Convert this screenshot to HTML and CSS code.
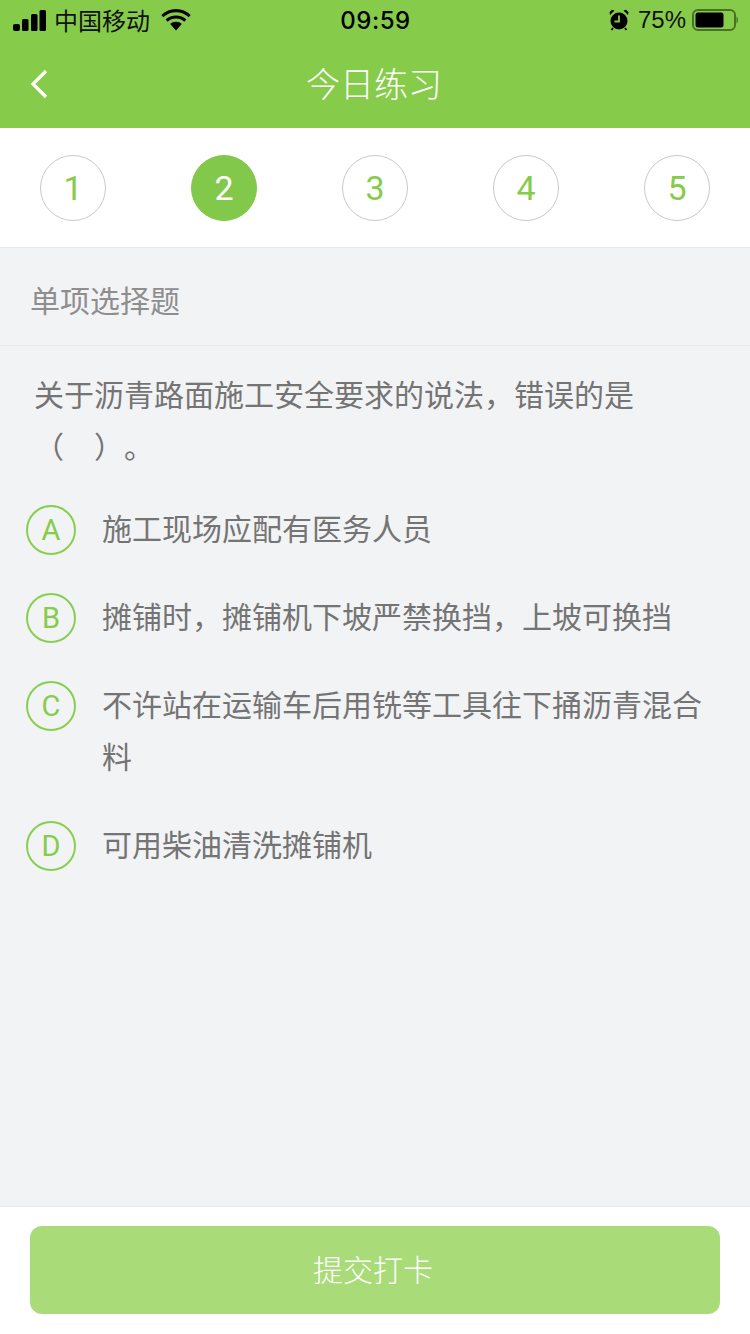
FILE: index.html
```html
<!DOCTYPE html>
<html lang="zh-CN">
<head>
<meta charset="utf-8">
<title>今日练习</title>
<link rel="stylesheet" href="styles.css">
</head>
<body>
<div class="page">
  <header class="top">
    <div class="status">
      <div class="status-left">
        <svg class="signal" width="33" height="21" viewBox="0 0 33 21"><rect x="0" y="14" width="7" height="7" rx="2"/><rect x="9" y="9" width="6.500" height="12" rx="1.500"/><rect x="18" y="4" width="6.500" height="17" rx="1.500"/><rect x="26.500" y="0" width="6.500" height="21" rx="1.500"/></svg>
        <span class="carrier">中国移动</span>
        <svg class="wifi" width="30" height="22" viewBox="0 0 30 22"><path d="M15 3.200c4.900 0 9.400 1.900 12.700 5l2-2.200C25.800 2.300 20.700 0 15 0S4.200 2.300.3 6l2 2.200c3.300-3.100 7.800-5 12.700-5z"/><path d="M15 9.500c3.200 0 6.100 1.200 8.300 3.200l2.100-2.300C22.700 7.900 19 6.400 15 6.400s-7.700 1.500-10.400 4l2.100 2.300c2.200-2 5.100-3.200 8.300-3.200z"/><path d="M15 12.700c-2.300 0-4.300.9-5.800 2.300L15 21.500l5.800-6.500c-1.500-1.400-3.500-2.300-5.800-2.300z"/></svg>
      </div>
      <div class="time">09:59</div>
      <div class="status-right">
        <svg class="alarm" width="20" height="22" viewBox="0 0 20 22"><circle cx="10" cy="12" r="8.500"/><path d="M1 6 5.500 1.500 3 .8.500 3.300z M19 6 14.500 1.500 17 .8 19.500 3.300z"/><path d="M4 19 2.500 21 M16 19 17.500 21" stroke="#000" stroke-width="1.800" fill="none"/><path d="M10 6.500V12.500H5.500" stroke="#86cc4a" stroke-width="1.800" fill="none"/></svg>
        <span class="percent">75%</span>
        <svg class="battery" width="46" height="22" viewBox="0 0 46 22"><rect x="1" y="1" width="42" height="20" rx="5" fill="none" stroke="#000" stroke-opacity=".45" stroke-width="2"/><rect x="3.500" y="3.500" width="28" height="15" rx="2.500"/><path d="M44.500 7.500c1 .5 1.500 2 1.500 3.500s-.5 3-1.500 3.500z" fill-opacity=".45"/></svg>
      </div>
    </div>
    <nav class="nav">
      <svg class="back" width="18" height="30" viewBox="0 0 18 30"><path d="M16 2 3 15l13 13" fill="none" stroke="#fff" stroke-width="3.200"/></svg>
      <h1 class="title">今日练习</h1>
      <span class="nav-side"></span>
    </nav>
  </header>

  <div class="steps">
    <span class="step">1</span>
    <span class="step step-active">2</span>
    <span class="step">3</span>
    <span class="step">4</span>
    <span class="step">5</span>
  </div>

  <main class="content">
    <div class="type">单项选择题</div>
    <div class="question">关于沥青路面施工安全要求的说法，错误的是<br>（　）。</div>
    <ul class="options">
      <li class="option"><span class="letter">A</span><span class="option-text">施工现场应配有医务人员</span></li>
      <li class="option"><span class="letter">B</span><span class="option-text">摊铺时，摊铺机下坡严禁换挡，上坡可换挡</span></li>
      <li class="option"><span class="letter">C</span><span class="option-text">不许站在运输车后用铣等工具往下捅沥青混合料</span></li>
      <li class="option"><span class="letter">D</span><span class="option-text">可用柴油清洗摊铺机</span></li>
    </ul>
  </main>

  <footer class="footer">
    <button class="submit" type="button">提交打卡</button>
  </footer>
</div>
</body>
</html>
```
FILE: styles.css
```css
* { box-sizing: border-box; }
html, body { margin: 0; padding: 0; }
body {
  font-family: "Noto Sans CJK SC", "Liberation Sans", sans-serif;
  background: #f2f3f5;
  color: #666;
  text-spacing-trim: space-all;
}
.page {
  width: 750px;
  height: 1334px;
  display: flex;
  flex-direction: column;
  overflow: hidden;
}
.top { background: #86cc4a; height: 128px; flex: none; }
.status {
  height: 40px;
  display: grid;
  grid-template-columns: 1fr auto 1fr;
  grid-template-rows: 40px;
  align-items: center;
  color: #000;
  padding: 0 12px 0 13px;
}
.status svg { display: block; flex: none; }
.status-left, .status-right { display: flex; align-items: center; }
.status-right { justify-content: flex-end; }
.carrier { font-size: 24px; line-height: 40px; margin-left: 8px; color: #111; font-weight: 400; }
.wifi { margin-left: 11px; }
.time { font-family: "Inter", "Liberation Sans", sans-serif; font-size: 24px; font-weight: 500; line-height: 36px; margin-top: 2px; letter-spacing: 0.5px; }
.percent { font-family: "Liberation Sans", sans-serif; font-size: 24px; line-height: 40px; margin-left: 9px; color: #111; }
.battery { margin-left: 6px; }
.nav {
  height: 88px;
  display: grid;
  grid-template-columns: 1fr auto 1fr;
  align-items: center;
  padding: 0 32px 0 30px;
}
.back { display: block; }
.title { margin: 0; padding-bottom: 2px; font-size: 34px; font-weight: 300; color: #fff; line-height: 86px; }
.steps {
  flex: none;
  height: 120px;
  background: #fff;
  border-bottom: 1px solid #e8e9eb;
  display: flex;
  justify-content: space-between;
  align-items: flex-start;
  padding: 27px 40px 0;
}
.step {
  width: 66px;
  height: 66px;
  border: 1px solid #c9c9c9;
  border-radius: 50%;
  display: flex;
  align-items: center;
  justify-content: center;
  font-family: "Roboto", "Liberation Sans", sans-serif;
  font-size: 34px;
  color: #86cc4a;
}
.step-active { background: #82c84a; border-color: #82c84a; color: #fff; }
.content { flex: 1; min-height: 0; }
.type {
  height: 98px;
  line-height: 102px;
  padding-left: 30px;
  font-size: 30px;
  font-weight: 400;
  color: #8e8e8e;
  border-bottom: 1px solid #e9eaec;
}
.question {
  padding: 21px 30px 0 34px;
  font-size: 30px;
  font-weight: 400;
  line-height: 52px;
  color: #747474;
}
.options {
  list-style: none;
  margin: 33px 0 0;
  padding: 0 30px 0 26px;
  display: flex;
  flex-direction: column;
  gap: 36px;
}
.option { display: flex; align-items: flex-start; }
.letter {
  flex: none;
  width: 50px;
  height: 50px;
  margin-top: 1px;
  border: 2px solid #88cf50;
  border-radius: 50%;
  display: flex;
  align-items: center;
  justify-content: center;
  font-family: "Roboto", "Liberation Sans", sans-serif;
  font-size: 29px;
  color: #86cc4a;
}
.option-text {
  margin: -3px 0 3px 26px;
  font-size: 30px;
  font-weight: 400;
  line-height: 52px;
  color: #747474;
}
.footer {
  flex: none;
  height: 128px;
  background: #fff;
  border-top: 1px solid #e8e9eb;
  padding: 19px 30px 0;
}
.submit {
  display: block;
  width: 690px;
  height: 88px;
  border: 0;
  border-radius: 12px;
  background: #a9dc78;
  color: #fff;
  font-family: inherit;
  font-size: 30px;
  font-weight: 300;
  padding: 0 4px 4px 0;
}
```
